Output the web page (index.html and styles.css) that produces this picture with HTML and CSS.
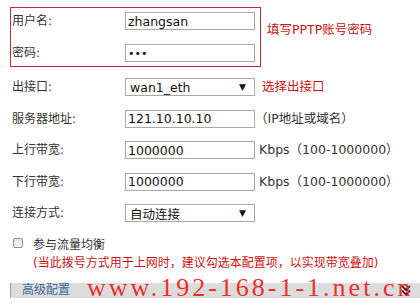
FILE: index.html
```html
<!DOCTYPE html>
<html lang="zh-CN">
<head>
    <meta charset="UTF-8">
    <title>PPTP 拨号配置</title>
    <link rel="stylesheet" href="styles.css">
</head>
<body>
    <div class="page">
        <div class="account">
            <div class="account-box">
                <div class="field">
                    <label class="label">用户名:</label>
                    <input class="text-input" type="text" value="zhangsan">
                </div>
                <div class="field">
                    <label class="label">密码:</label>
                    <input class="text-input password" type="password" value="123">
                </div>
            </div>
            <span class="account-hint">填写PPTP账号密码</span>
        </div>

        <div class="form-rows">
            <div class="row">
                <label class="label">出接口:</label>
                <div class="select">wan1_eth<span class="arrow">▼</span></div>
                <span class="note red">选择出接口</span>
            </div>
            <div class="row">
                <label class="label">服务器地址:</label>
                <input class="text-input" type="text" value="121.10.10.10">
                <span class="note paren">（IP地址或域名）</span>
            </div>
            <div class="row">
                <label class="label">上行带宽:</label>
                <input class="text-input" type="text" value="1000000">
                <span class="note">Kbps（100-1000000）</span>
            </div>
            <div class="row">
                <label class="label">下行带宽:</label>
                <input class="text-input" type="text" value="1000000">
                <span class="note">Kbps（100-1000000）</span>
            </div>
            <div class="row">
                <label class="label">连接方式:</label>
                <div class="select">自动连接<span class="arrow">▼</span></div>
            </div>
        </div>

        <div class="check-row">
            <span class="checkbox"></span>
            <span>参与流量均衡</span>
        </div>
        <div class="warn">(当此拨号方式用于上网时，建议勾选本配置项，以实现带宽叠加)</div>

        <div class="advanced">
            <span class="advanced-title">高级配置</span>
            <svg class="expand-icon" width="10" height="11" viewBox="0 0 10 11">
                <path d="M1 1 L5 5 L9 1" fill="none" stroke="#111" stroke-width="1.6"/>
                <path d="M1 5.5 L5 9.5 L9 5.5" fill="none" stroke="#111" stroke-width="1.6"/>
            </svg>
        </div>

        <div class="watermark">www.192-168-1-1.net.cn</div>
    </div>
</body>
</html>
```

FILE: styles.css
```css
* {
    margin: 0;
    padding: 0;
    box-sizing: border-box;
}

body, html {
    height: 100%;
    overflow: hidden;
    background-color: #ffffff;
}

body {
    font-family: "DejaVu Sans", "Noto Sans CJK SC", sans-serif;
    font-size: 12px;
    color: #333333;
}

.page {
    position: relative;
    height: 100%;
    padding: 7px 0 0 10px;
}

/* 账号密码 */
.account {
    display: flex;
    align-items: flex-start;
}

.account-box {
    width: 251px;
    border: 1px solid #c4283c;
    padding: 4px 5px 4px 0;
    display: flex;
    flex-direction: column;
    gap: 14px;
}

.account-hint {
    margin: 15px 0 0 6px;
    line-height: 16px;
    font-size: 12.5px;
    color: #cc1111;
}

.field {
    display: flex;
    align-items: center;
    height: 18px;
}

.label {
    width: 114px;
    flex-shrink: 0;
    padding-left: 1px;
    line-height: 16px;
}

.text-input {
    width: 130px;
    height: 18px;
    border: 1px solid #a9a9a9;
    padding: 0 2px;
    font-family: "DejaVu Sans", "Noto Sans CJK SC", sans-serif;
    font-size: 12.5px;
    color: #111111;
    outline: none;
    background-color: #ffffff;
}

.password {
    font-size: 11px;
}

/* 表单行 */
.form-rows {
    margin-top: 4.5px;
}

.row {
    display: flex;
    align-items: center;
    height: 31.5px;
}

.row .label {
    width: 115px;
    padding-left: 2px;
}

.select {
    width: 130px;
    height: 18px;
    border: 1px solid #a9a9a9;
    padding-left: 4px;
    display: flex;
    align-items: center;
    justify-content: space-between;
    font-size: 12.5px;
    color: #111111;
}

.arrow {
    font-size: 9px;
    margin-right: 8px;
    color: #111111;
}

.note {
    margin-left: 4px;
    line-height: 16px;
    font-size: 12.5px;
}

.note.red {
    margin-left: 7px;
    color: #cc1111;
}

.note.paren {
    margin-left: 0;
}

/* 流量均衡 */
.check-row {
    display: flex;
    align-items: center;
    height: 28px;
    padding-left: 3px;
}

.checkbox {
    width: 10px;
    height: 10px;
    margin-right: 10px;
    border: 1px solid #8f8f8f;
    border-radius: 2px;
    background: linear-gradient(#e4e4e4, #f6f6f6);
}

.warn {
    padding-left: 23px;
    line-height: 12px;
    color: #cc1111;
}

/* 高级配置 */
.advanced {
    margin-top: 14px;
    height: 15px;
    display: flex;
    align-items: center;
    justify-content: space-between;
    background-color: #dcdcdc;
    border-left: 1px solid #a0a0a0;
    padding: 0 9px 0 11px;
}

.advanced-title {
    color: #3d6a96;
    line-height: 15px;
}

.watermark {
    position: absolute;
    left: 87px;
    top: 275px;
    font-family: "Liberation Serif", serif;
    font-size: 26px;
    line-height: 26px;
    letter-spacing: 3px;
    color: #f01c1c;
    white-space: nowrap;
    opacity: 0.92;
}
```
